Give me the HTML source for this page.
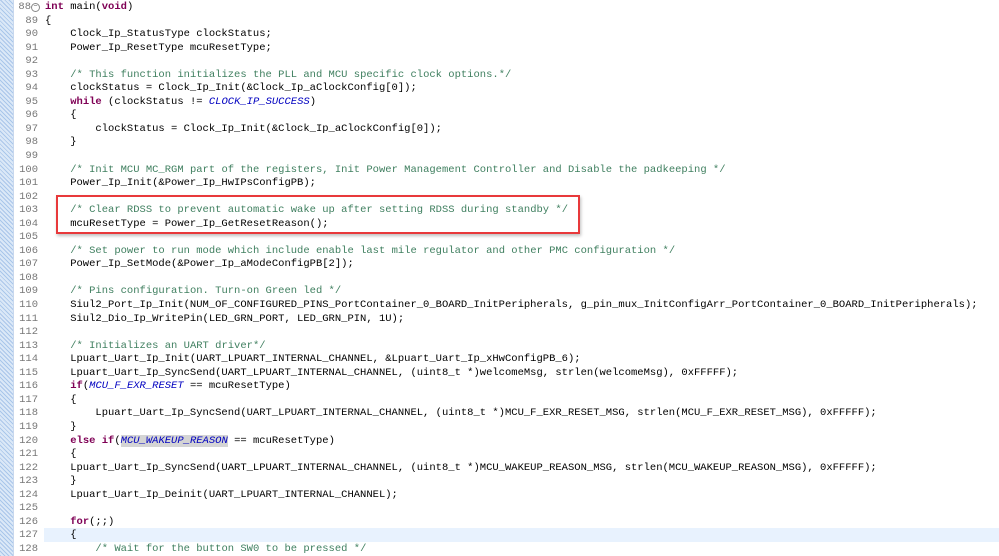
<!DOCTYPE html>
<html><head><meta charset="utf-8"><style>
body{margin:0;width:999px;height:556px;overflow:hidden;background:#fff;position:relative;font-family:"Liberation Mono",monospace;font-size:10.5px;}
.gut{position:absolute;left:0;top:0;width:13px;height:556px;background:repeating-linear-gradient(45deg,#a9c6ea 0 1px,#dbe8f7 1px 3px);border-right:1px solid #c8d8ee;}
.hl{position:absolute;left:44px;top:528px;width:955px;height:14px;background:#e8f2fe;}
#code{position:absolute;left:0;top:1px;line-height:13.55px;white-space:pre;color:#000;}
.l{display:block;height:13.55px}
.n{display:inline-block;width:45px;text-align:right;color:#787878;padding-right:7px;box-sizing:border-box}
.n0{padding-right:14px}
.k{color:#7f0055;font-weight:bold}
.c{color:#3f7f5f}
.i{color:#0000c0;font-style:italic}
.box{position:absolute;left:56px;top:195px;width:524px;height:39px;border:2px solid #e8393b;box-sizing:border-box;box-shadow:1px 2px 3px rgba(0,0,0,.25)}
.sel{background:#d4d4d4}
.fold{position:absolute;left:31px;top:3px;width:7px;height:7px;border:1px solid #888;border-radius:50%;font-size:7px;line-height:7px;text-align:center;color:#555;background:#fff}
</style></head><body>
<div class="gut"></div>
<div class="hl"></div>
<div id="code"><span class="l"><span class="n n0">88</span><span class="k">int</span> main(<span class="k">void</span>)</span><span class="l"><span class="n">89</span>{</span><span class="l"><span class="n">90</span>    Clock_Ip_StatusType clockStatus;</span><span class="l"><span class="n">91</span>    Power_Ip_ResetType mcuResetType;</span><span class="l"><span class="n">92</span></span><span class="l"><span class="n">93</span>    <span class="c">/* This function initializes the PLL and MCU specific clock options.*/</span></span><span class="l"><span class="n">94</span>    clockStatus = Clock_Ip_Init(&amp;Clock_Ip_aClockConfig[0]);</span><span class="l"><span class="n">95</span>    <span class="k">while</span> (clockStatus != <span class="i">CLOCK_IP_SUCCESS</span>)</span><span class="l"><span class="n">96</span>    {</span><span class="l"><span class="n">97</span>        clockStatus = Clock_Ip_Init(&amp;Clock_Ip_aClockConfig[0]);</span><span class="l"><span class="n">98</span>    }</span><span class="l"><span class="n">99</span></span><span class="l"><span class="n">100</span>    <span class="c">/* Init MCU MC_RGM part of the registers, Init Power Management Controller and Disable the padkeeping */</span></span><span class="l"><span class="n">101</span>    Power_Ip_Init(&amp;Power_Ip_HwIPsConfigPB);</span><span class="l"><span class="n">102</span></span><span class="l"><span class="n">103</span>    <span class="c">/* Clear RDSS to prevent automatic wake up after setting RDSS during standby */</span></span><span class="l"><span class="n">104</span>    mcuResetType = Power_Ip_GetResetReason();</span><span class="l"><span class="n">105</span></span><span class="l"><span class="n">106</span>    <span class="c">/* Set power to run mode which include enable last mile regulator and other PMC configuration */</span></span><span class="l"><span class="n">107</span>    Power_Ip_SetMode(&amp;Power_Ip_aModeConfigPB[2]);</span><span class="l"><span class="n">108</span></span><span class="l"><span class="n">109</span>    <span class="c">/* Pins configuration. Turn-on Green led */</span></span><span class="l"><span class="n">110</span>    Siul2_Port_Ip_Init(NUM_OF_CONFIGURED_PINS_PortContainer_0_BOARD_InitPeripherals, g_pin_mux_InitConfigArr_PortContainer_0_BOARD_InitPeripherals);</span><span class="l"><span class="n">111</span>    Siul2_Dio_Ip_WritePin(LED_GRN_PORT, LED_GRN_PIN, 1U);</span><span class="l"><span class="n">112</span></span><span class="l"><span class="n">113</span>    <span class="c">/* Initializes an UART driver*/</span></span><span class="l"><span class="n">114</span>    Lpuart_Uart_Ip_Init(UART_LPUART_INTERNAL_CHANNEL, &amp;Lpuart_Uart_Ip_xHwConfigPB_6);</span><span class="l"><span class="n">115</span>    Lpuart_Uart_Ip_SyncSend(UART_LPUART_INTERNAL_CHANNEL, (uint8_t *)welcomeMsg, strlen(welcomeMsg), 0xFFFFF);</span><span class="l"><span class="n">116</span>    <span class="k">if</span>(<span class="i">MCU_F_EXR_RESET</span> == mcuResetType)</span><span class="l"><span class="n">117</span>    {</span><span class="l"><span class="n">118</span>        Lpuart_Uart_Ip_SyncSend(UART_LPUART_INTERNAL_CHANNEL, (uint8_t *)MCU_F_EXR_RESET_MSG, strlen(MCU_F_EXR_RESET_MSG), 0xFFFFF);</span><span class="l"><span class="n">119</span>    }</span><span class="l"><span class="n">120</span>    <span class="k">else if</span>(<span class="i sel">MCU_WAKEUP_REASON</span> == mcuResetType)</span><span class="l"><span class="n">121</span>    {</span><span class="l"><span class="n">122</span>    Lpuart_Uart_Ip_SyncSend(UART_LPUART_INTERNAL_CHANNEL, (uint8_t *)MCU_WAKEUP_REASON_MSG, strlen(MCU_WAKEUP_REASON_MSG), 0xFFFFF);</span><span class="l"><span class="n">123</span>    }</span><span class="l"><span class="n">124</span>    Lpuart_Uart_Ip_Deinit(UART_LPUART_INTERNAL_CHANNEL);</span><span class="l"><span class="n">125</span></span><span class="l"><span class="n">126</span>    <span class="k">for</span>(;;)</span><span class="l"><span class="n">127</span>    {</span><span class="l"><span class="n">128</span>        <span class="c">/* Wait for the button SW0 to be pressed */</span></span></div>
<div class="fold">−</div>
<div class="box"></div>
</body></html>
